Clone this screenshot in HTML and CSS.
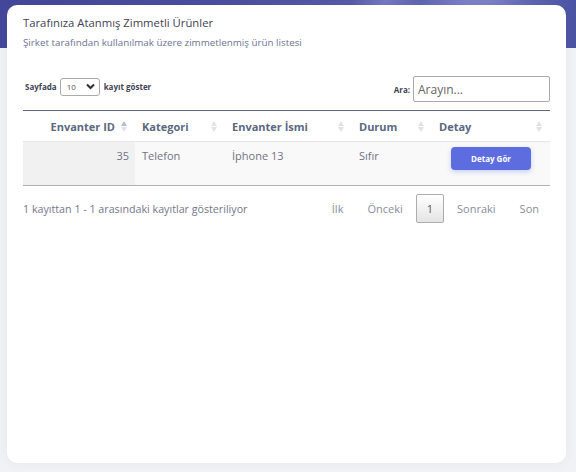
FILE: index.html
```html
<!DOCTYPE html>
<html lang="tr">
<head>
    <meta charset="utf-8" />
    <title>Zimmetli Ürünler</title>
    <link rel="stylesheet" href="styles.css">
</head>
<body>

<div class="portlet">
    <div class="portletHead">
        <h3 class="portletTitle">Tarafınıza Atanmış Zimmetli Ürünler</h3>
        <p class="portletDesc">Şirket tarafından kullanılmak üzere zimmetlenmiş ürün listesi</p>
    </div>

    <div class="dtWrapper">
        <div class="dtTop">
            <label class="dtLength">Sayfada
                <span class="selectBox">10
                    <svg width="9" height="7" viewBox="0 0 9 7"><path d="M1 1.5 L4.5 5 L8 1.5" fill="none" stroke="#2b2f3a" stroke-width="2"/></svg>
                </span>
                kayıt göster</label>
            <label class="dtFilter">Ara: <input type="text" class="searchInput" placeholder="Arayın..." /></label>
        </div>

        <table class="dtTable">
            <thead>
                <tr>
                    <th class="colId right sortAsc">Envanter ID</th>
                    <th class="colCat">Kategori</th>
                    <th class="colName">Envanter İsmi</th>
                    <th class="colState">Durum</th>
                    <th class="colDetail">Detay</th>
                </tr>
            </thead>
            <tbody>
                <tr>
                    <td class="right sorted">35</td>
                    <td>Telefon</td>
                    <td>İphone 13</td>
                    <td>Sıfır</td>
                    <td class="center"><a class="btnDetail" href="#">Detay Gör</a></td>
                </tr>
            </tbody>
        </table>

        <div class="dtBottom">
            <div class="dtInfo">1 kayıttan 1 - 1 arasındaki kayıtlar gösteriliyor</div>
            <div class="dtPaging">
                <a class="pageBtn">İlk</a>
                <a class="pageBtn">Önceki</a>
                <a class="pageBtn current">1</a>
                <a class="pageBtn">Sonraki</a>
                <a class="pageBtn">Son</a>
            </div>
        </div>
    </div>
</div>

</body>
</html>
```

FILE: styles.css
```css
/* Page
---------------------------------------------------------------- */
html, body {
    margin: 0;
    padding: 0;
    }
body {
    font-family: "Open Sans", "DejaVu Sans", sans-serif;
    color: #74788d;
    background:
        linear-gradient(100deg, rgba(255,255,255,0) 60%, rgba(170,176,235,.35) 66%, rgba(255,255,255,0) 72%, rgba(160,168,230,.3) 80%, rgba(255,255,255,0) 90%) top left / 100% 48px no-repeat,
        linear-gradient(90deg, #43479a 0%, #4a4f9f 40%, #5a60ad 70%, #7379c2 85%, #4a52a3 100%) top left / 100% 48px no-repeat,
        #f1f2f5;
    height: 472px;
    overflow: hidden;
    }

/* Card
---------------------------------------------------------------- */
.portlet {
    background: #fff;
    margin: 5px 10px 0 7px;
    height: 458px;
    border-radius: 10px;
    box-shadow: 0 0 12px rgba(82, 63, 105, .06);
    padding: 9px 16px 0;
    box-sizing: border-box;
    }
.portletTitle {
    margin: 0;
    font-size: 11.3px;
    line-height: 17px;
    font-weight: normal;
    color: #3f4254;
    }
.portletDesc {
    margin: 5px 0 0;
    font-size: 9.8px;
    line-height: 14px;
    color: #6c7293;
    }

/* DataTable
---------------------------------------------------------------- */
.dtWrapper {
    margin-top: 26px;
    }
.dtTop {
    display: flex;
    justify-content: space-between;
    align-items: center;
    height: 26px;
    }
.dtLength, .dtFilter {
    font-size: 8px;
    font-weight: bold;
    color: #3f4254;
    display: flex;
    align-items: center;
    }
.dtLength {
    padding-left: 2px;
    margin-top: -5px;
    }
.selectBox {
    display: inline-flex;
    align-items: center;
    justify-content: space-between;
    box-sizing: border-box;
    width: 40px;
    height: 18px;
    margin: 0 4px 0 3px;
    padding: 0 4px 0 6px;
    border: 1px solid #aaa;
    border-radius: 3px;
    font-weight: normal;
    color: #555;
    }
.searchInput {
    box-sizing: border-box;
    width: 137px;
    height: 26px;
    margin-left: 3px;
    padding: 0 4px;
    border: 1px solid #aaa;
    border-radius: 2px;
    font-family: "Open Sans", "DejaVu Sans", sans-serif;
    font-size: 12px;
    color: #555;
    }
.searchInput::placeholder {
    color: #666;
    }

.dtTable {
    width: 100%;
    margin-top: 8px;
    border-collapse: collapse;
    table-layout: fixed;
    border-top: 1px solid #5e6a80;
    border-bottom: 1px solid #b1b1b1;
    }
.dtTable th {
    position: relative;
    box-sizing: border-box;
    height: 31px;
    padding: 0 20px 0 7px;
    font-size: 11px;
    font-weight: bold;
    text-align: left;
    color: #5b6880;
    border-bottom: 1px solid #e6e6e6;
    }
/* sort arrows: up triangle on top, down triangle below */
.dtTable th::before,
.dtTable th::after {
    content: "";
    position: absolute;
    right: 8px;
    width: 0;
    height: 0;
    border-left: 3.5px solid transparent;
    border-right: 3.5px solid transparent;
    }
.dtTable th::before {
    top: 10px;
    border-bottom: 5px solid #e2e3e8;
    }
.dtTable th::after {
    top: 16px;
    border-top: 5px solid #e2e3e8;
    }
.dtTable th.sortAsc::before {
    border-bottom-color: #b8bdca;
    }
.dtTable .colId { width: 112px; }
.dtTable .colCat { width: 90px; }
.dtTable .colName { width: 127px; }
.dtTable .colState { width: 80px; }
.dtTable th.right { text-align: right; }

.dtTable td {
    height: 44px;
    box-sizing: border-box;
    padding: 6px 7px 0;
    vertical-align: top;
    font-size: 11px;
    line-height: 15px;
    color: #707384;
    background: #f9f9f9;
    }
.dtTable td.sorted {
    background: #f1f1f1;
    }
.dtTable td.right {
    text-align: right;
    padding-right: 6px;
    }
.dtTable td.center {
    text-align: center;
    padding-top: 5px;
    }
.btnDetail {
    display: inline-block;
    width: 80px;
    height: 23px;
    line-height: 23px;
    border-radius: 4px;
    background: #5d6de0;
    color: #fff;
    font-size: 8px;
    font-weight: bold;
    text-decoration: none;
    box-shadow: 0 2px 5px rgba(93, 109, 224, .3);
    }

.dtBottom {
    display: flex;
    justify-content: space-between;
    align-items: center;
    margin-top: 8px;
    }
.dtInfo {
    font-size: 10.7px;
    color: #737789;
    }
.dtPaging {
    display: flex;
    }
.pageBtn {
    box-sizing: border-box;
    height: 29px;
    line-height: 27px;
    margin-left: 2px;
    padding: 0 10px;
    border: 1px solid transparent;
    border-radius: 2px;
    font-size: 11px;
    color: #8a8d99;
    }
.pageBtn.current {
    color: #555;
    border-color: #adadad;
    background: linear-gradient(to bottom, #fff 0%, #e4e4e4 100%);
    }
```
